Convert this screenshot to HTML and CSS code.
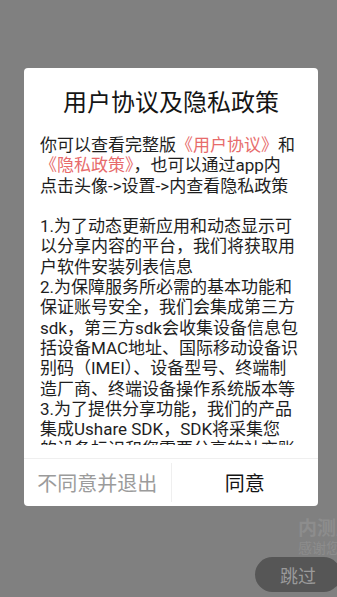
FILE: index.html
```html
<!DOCTYPE html>
<html lang="zh-CN">
<head>
    <meta charset="UTF-8">
    <meta name="viewport" content="width=device-width, initial-scale=1.0">
    <title>用户协议及隐私政策</title>
    <link rel="stylesheet" href="styles.css">
</head>
<body>
    <div class="splash">
        <div class="hint">
            <div class="hint-title">内测版本</div>
            <div class="hint-sub">感谢您的参与</div>
        </div>
        <button class="skip-btn">跳过</button>
    </div>

    <div class="dialog">
        <h1 class="dialog-title">用户协议及隐私政策</h1>
        <div class="dialog-body">
            <p>你可以查看完整版<a class="link" href="#">《用户协议》</a>和<br><a class="link" href="#">《隐私政策》</a>，也可以通过app内<br>点击头像-&gt;设置-&gt;内查看隐私政策</p>
            <p>1.为了动态更新应用和动态显示可<br>以分享内容的平台，我们将获取用<br>户软件安装列表信息<br>2.为保障服务所必需的基本功能和<br>保证账号安全，我们会集成第三方<br>sdk，第三方sdk会收集设备信息包<br>括设备MAC地址、国际移动设备识<br>别码（IMEI）、设备型号、终端制<br>造厂商、终端设备操作系统版本等<br>3.为了提供分享功能，我们的产品<br>集成Ushare SDK，SDK将采集您<br>的设备标识和您需要分享的社交账</p>
        </div>
        <div class="dialog-actions">
            <button class="action-btn decline">不同意并退出</button>
            <button class="action-btn agree">同意</button>
        </div>
    </div>
</body>
</html>
```

FILE: styles.css
```css
html, body {
    margin: 0;
    padding: 0;
    height: 100%;
}

body {
    position: relative;
    overflow: hidden;
    background: #808080;
    font-family: Roboto, "Noto Sans CJK SC", sans-serif;
}

/* page under the dialog */
.splash {
    height: 100%;
    box-sizing: border-box;
    display: flex;
    flex-direction: column;
    justify-content: flex-end;
    align-items: flex-end;
    padding-bottom: 5px;
}

.hint {
    width: 39px;
    white-space: nowrap;
    color: #8d8d8d;
}

.hint-title {
    font-size: 19px;
    line-height: 22px;
    font-weight: bold;
}

.hint-sub {
    font-size: 14px;
    line-height: 17px;
}

.skip-btn {
    width: 86px;
    height: 35px;
    margin-right: -4px;
    border: none;
    border-radius: 18px;
    background: #565656;
    color: #9a9a9a;
    font-family: inherit;
    font-size: 18px;
    padding: 0;
}

/* dialog */
.dialog {
    position: absolute;
    top: 68px;
    left: 24px;
    width: 294px;
    height: 438px;
    background: #fff;
    border-radius: 4px;
    display: flex;
    flex-direction: column;
}

.dialog-title {
    margin: 20px 0 17px;
    font-size: 24px;
    line-height: 30px;
    font-weight: normal;
    text-align: center;
    color: #151515;
}

.dialog-body {
    height: 310px;
    overflow: hidden;
    padding: 0 10px 0 16px;
    font-size: 17px;
    line-height: 20.3px;
    color: #1e1e1e;
    white-space: nowrap;
}

.dialog-body p {
    margin: 0 0 20.3px;
}

.link {
    color: #e76b6b;
    text-decoration: none;
}

.dialog-actions {
    margin-top: 13px;
    border-top: 1px solid #efefef;
    display: flex;
    flex: 1;
}

.action-btn {
    flex: 1;
    border: none;
    background: none;
    padding: 0;
    font-family: inherit;
    font-size: 20px;
}

.decline {
    color: #9b9b9b;
    border-right: 1px solid #efefef;
    margin: 4px 0;
}

.agree {
    color: #141414;
}
```
